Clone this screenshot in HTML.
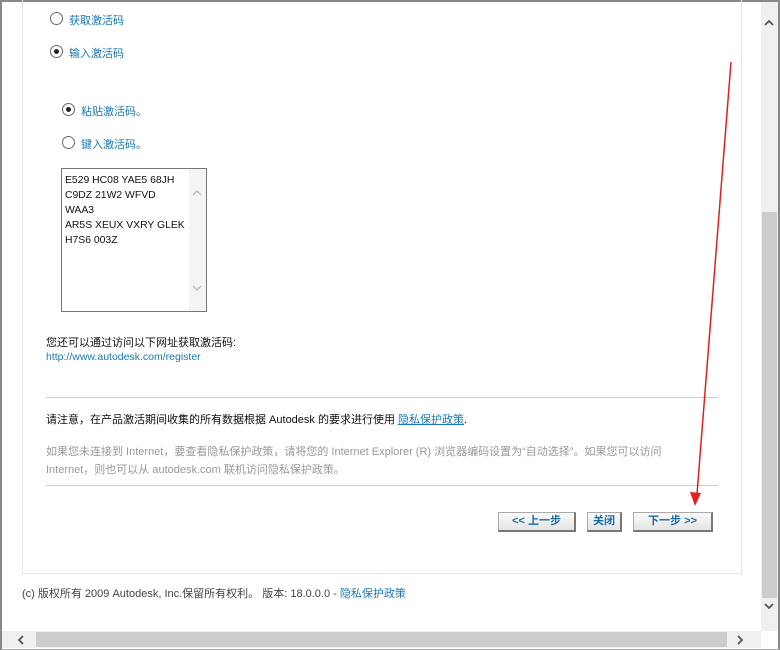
<!DOCTYPE html>
<html><head><meta charset="utf-8"><style>
*{margin:0;padding:0;box-sizing:border-box}
body{width:780px;height:650px;overflow:hidden;background:#fff;font-family:"Liberation Sans","Noto Sans CJK SC",sans-serif;font-size:11px;position:relative}
.a{position:absolute}
.frame{left:0;top:0;width:780px;height:650px;border-top:2px solid #888;border-left:2px solid #888;border-right:2px solid #888;border-bottom:1px solid #aaa}
.box{left:22px;top:-2px;width:720px;height:576px;border:1px solid #e4e4e4}
.r{width:13px;height:13px;border:1px solid #666;border-radius:50%;background:#fff}
.r.on::after{content:"";position:absolute;left:3px;top:3px;width:5px;height:5px;border-radius:50%;background:#222}
.lbl{color:#1a7ab0;font-size:11px}
.ta{left:61px;top:168px;width:146px;height:144px;border:1px solid #777;background:#fff}
.ta .sb{position:absolute;right:0;top:0;width:17px;height:142px;background:#f4f4f4}
.ta pre{position:absolute;left:3px;top:4px;font-family:"Liberation Sans",sans-serif;font-size:10.4px;line-height:15px;color:#111}
.hr{left:46px;width:672px;height:1px;background:#ccc}
.btn{top:512px;height:20px;background:linear-gradient(#fafafa,#e4e4e4);border:1px solid #aaa;border-right:2px solid #777;border-bottom:2px solid #777;color:#1a6ea0;font-weight:bold;font-size:11px;text-align:center;line-height:17px}
</style></head><body>
<div class="a frame"></div>
<div class="a box"></div>
<div class="a r" style="left:50px;top:12px"></div><div class="a lbl" style="left:69px;top:12px">获取激活码</div>
<div class="a r on" style="left:50px;top:45px"></div><div class="a lbl" style="left:69px;top:45px">输入激活码</div>
<div class="a r on" style="left:62px;top:103px"></div><div class="a lbl" style="left:81px;top:103px">粘贴激活码。</div>
<div class="a r" style="left:62px;top:136px"></div><div class="a lbl" style="left:81px;top:136px">键入激活码。</div>
<div class="a ta"><div class="sb"><svg width="17" height="142"><path d="M4 26l4-4 4 4" stroke="#bbb" fill="none" stroke-width="1.3"/><path d="M4 117l4 4 4-4" stroke="#bbb" fill="none" stroke-width="1.3"/></svg></div>
<pre>E529 HC08 YAE5 68JH
C9DZ 21W2 WFVD
WAA3
AR5S XEUX VXRY GLEK
H7S6 003Z</pre></div>
<div class="a" style="left:46px;top:334px;color:#111">您还可以通过访问以下网址获取激活码:</div>
<div class="a lbl" style="left:46px;top:351px;font-size:10.5px">http://www.autodesk.com/register</div>
<div class="a hr" style="top:397px"></div>
<div class="a" style="left:46px;top:411px;color:#111">请注意，在产品激活期间收集的所有数据根据 Autodesk 的要求进行使用 <span class="lbl" style="text-decoration:underline">隐私保护政策</span>.</div>
<div class="a" style="left:46px;top:443px;color:#999;line-height:18px;white-space:nowrap">如果您未连接到 Internet，要查看隐私保护政策，请将您的 Internet Explorer (R) 浏览器编码设置为“自动选择”。如果您可以访问<br>Internet，则也可以从 autodesk.com 联机访问隐私保护政策。</div>
<div class="a hr" style="top:485px"></div>
<div class="a btn" style="left:498px;width:78px">&lt;&lt; 上一步</div>
<div class="a btn" style="left:587px;width:35px">关闭</div>
<div class="a btn" style="left:633px;width:80px">下一步 &gt;&gt;</div>
<div class="a" style="left:22px;top:585px;color:#444">(c) 版权所有 2009 Autodesk, Inc.保留所有权利。 版本: 18.0.0.0 - <span class="lbl">隐私保护政策</span></div>
<div class="a" style="left:761px;top:2px;width:17px;height:629px;background:#f0f0f0"></div>
<div class="a" style="left:762px;top:212px;width:15px;height:386px;background:#cdcdcd"></div>
<div class="a" style="left:2px;top:631px;width:759px;height:17px;background:#f0f0f0"></div>
<div class="a" style="left:36px;top:632px;width:691px;height:15px;background:#cdcdcd"></div>
<svg class="a" style="left:0;top:0" width="780" height="650">
<path d="M765 25l4-4 4 4M765 604l4 4 4-4M23 636l-4 4 4 4M738 636l4 4-4 4" stroke="#555" stroke-width="1.8" fill="none"/>
<line x1="731" y1="62" x2="697" y2="494" stroke="#e02020" stroke-width="1.5"/>
<path d="M690 492l5 14 6-13z" fill="#e02020"/>
</svg>
</body></html>
